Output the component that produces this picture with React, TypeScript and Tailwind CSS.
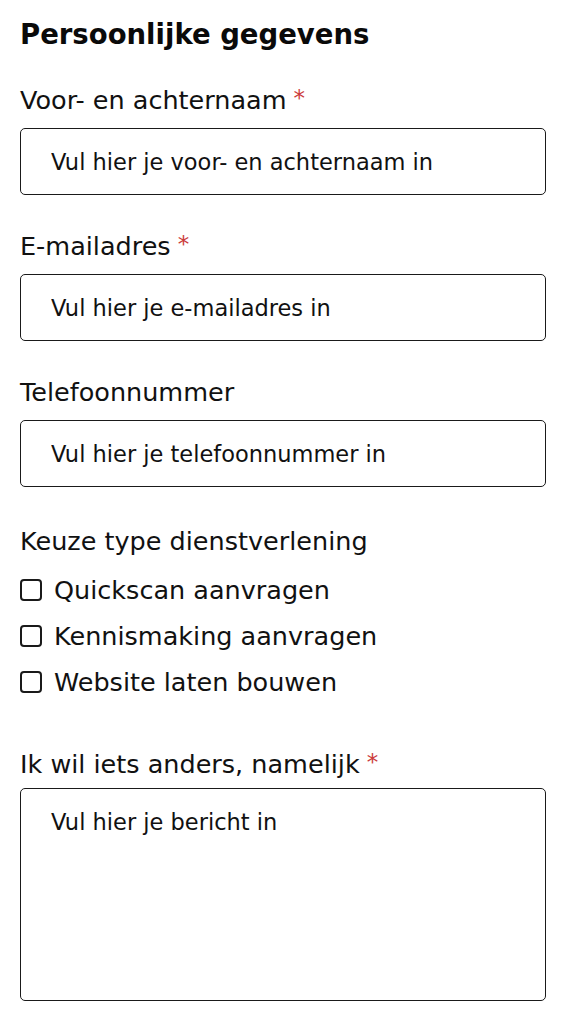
import React from "react";

const font = "font-['DejaVu_Sans',sans-serif]";

function Label({ text, required }: { text: string; required?: boolean }) {
  return (
    <div className="h-[32px] text-[25.5px] leading-[32px] text-[#111]">
      {text}
      {required && <span className="ml-[7px] align-[3px] text-[23px] leading-none text-[#cc3b3b]">*</span>}
    </div>
  );
}

function TextField({ placeholder }: { placeholder: string }) {
  return (
    <input
      type="text"
      placeholder={placeholder}
      className={`mt-[12px] block h-[67px] w-full rounded-[5px] border-[1.5px] border-[#1a1a1a] bg-white px-[30px] text-[22.5px] text-[#111] placeholder:text-[#111] outline-none ${font}`}
    />
  );
}

function Check({ text }: { text: string }) {
  return (
    <label className="flex h-[46px] items-center gap-[12px] text-[25.5px] text-[#111]">
      <span className="block h-[22px] w-[22px] shrink-0 rounded-[4px] border-[2.5px] border-[#1a1a1a]" />
      {text}
    </label>
  );
}

export default function App() {
  return (
    <div className={`min-h-[1024px] bg-white px-5 pt-[14px] ${font}`}>
      <h2 className="text-[27.5px] font-bold leading-[40px] text-[#0a0a0a]">Persoonlijke gegevens</h2>

      <div className="mt-[30px]">
        <Label text="Voor- en achternaam" required />
        <TextField placeholder="Vul hier je voor- en achternaam in" />
      </div>

      <div className="mt-[35px]">
        <Label text="E-mailadres" required />
        <TextField placeholder="Vul hier je e-mailadres in" />
      </div>

      <div className="mt-[35px]">
        <Label text="Telefoonnummer" />
        <TextField placeholder="Vul hier je telefoonnummer in" />
      </div>

      <div className="mt-[38px]">
        <Label text="Keuze type dienstverlening" />
        <div className="mt-[10px] flex flex-col">
          <Check text="Quickscan aanvragen" />
          <Check text="Kennismaking aanvragen" />
          <Check text="Website laten bouwen" />
        </div>
      </div>

      <div className="mt-[43px]">
        <Label text="Ik wil iets anders, namelijk" required />
        <textarea
          placeholder="Vul hier je bericht in"
          className={`mt-[8px] block h-[213px] w-full resize-none rounded-[5px] border-[1.5px] border-[#1a1a1a] bg-white px-[30px] pt-[18px] text-[22.5px] leading-[30px] text-[#111] placeholder:text-[#111] outline-none ${font}`}
        />
      </div>
    </div>
  );
}
